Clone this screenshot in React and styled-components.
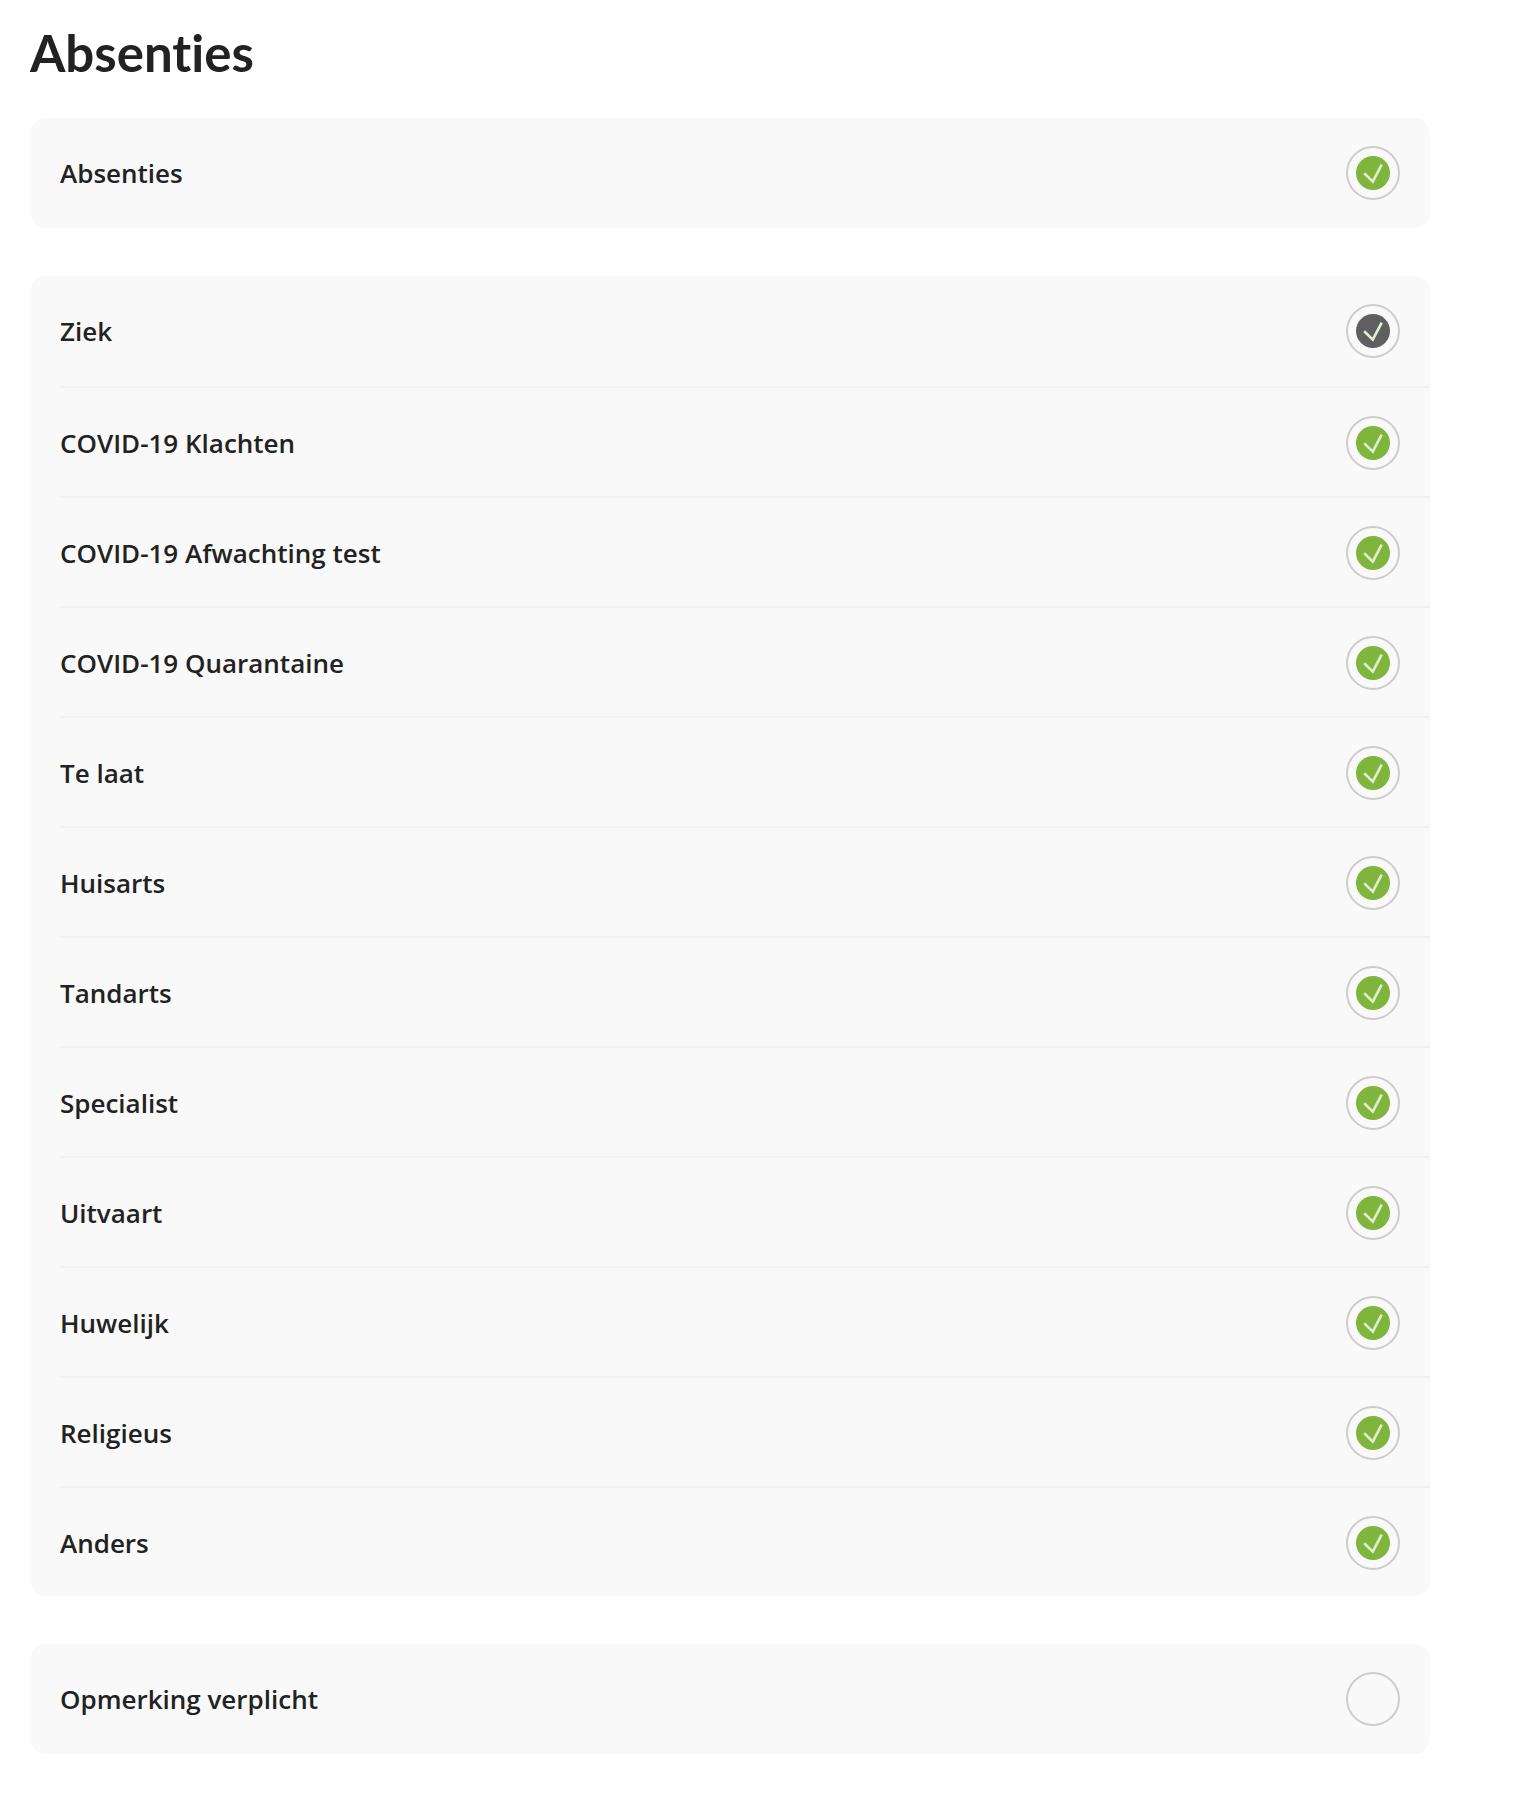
import React, { useState } from "react";
import styled, { createGlobalStyle } from "styled-components";

const GlobalStyle = createGlobalStyle`
    * {
        box-sizing: border-box;
    }

    body {
        margin: 0;
        background: #fff;
        color: #222;
        font-family: "Open Sans", "Noto Sans", sans-serif;
    }
`

const StyledPage = styled.main`
    display: flex;
    flex-direction: column;
    gap: 48px;
    padding: 24px 88px 46px 30px;
`

const StyledHeader = styled.header`
    display: flex;
    flex-direction: column;
    gap: 36px;
`

const StyledTitle = styled.h1`
    margin: 0;
    font-family: Lato, "Open Sans", sans-serif;
    font-size: 51px;
    line-height: 58px;
    font-weight: 700;
    font-variant-ligatures: none;
`

const StyledCard = styled.section`
    padding-left: 30px;
    border-radius: 16px;
    background: #f9f9f9;
`

const StyledRow = styled.label`
    display: flex;
    align-items: center;
    justify-content: space-between;
    padding: 28px 30px 28px 0;
    font-size: 26px;
    line-height: 36px;
    font-weight: 600;
    cursor: pointer;

    & + & {
        border-top: 2px solid #f1f1f1;
        padding-bottom: 26px;
    }
`

const StyledToggle = styled.span`
    display: grid;
    place-items: center;
    flex: none;
`

const StyledCheckbox = styled.input`
    appearance: none;
    grid-area: 1 / 1;
    width: 54px;
    height: 54px;
    margin: 0;
    border: 2px solid #ccc;
    border-radius: 50%;
    cursor: inherit;

    &:not(:checked) + svg {
        visibility: hidden;
    }
`

const StyledMark = styled.svg`
    grid-area: 1 / 1;
    width: 34px;
    height: 34px;
    border-radius: 50%;
    background: ${props => props.$locked ? '#5f5f5f' : '#7fb53c'};
    pointer-events: none;
`

const reasons = [
    { id: 'ziek', name: 'Ziek', locked: true },
    { id: 'klachten', name: 'COVID-19 Klachten' },
    { id: 'test', name: 'COVID-19 Afwachting test' },
    { id: 'quarantaine', name: 'COVID-19 Quarantaine' },
    { id: 'telaat', name: 'Te laat' },
    { id: 'huisarts', name: 'Huisarts' },
    { id: 'tandarts', name: 'Tandarts' },
    { id: 'specialist', name: 'Specialist' },
    { id: 'uitvaart', name: 'Uitvaart' },
    { id: 'huwelijk', name: 'Huwelijk' },
    { id: 'religieus', name: 'Religieus' },
    { id: 'anders', name: 'Anders' },
]

const Option = ({ id, name, locked, defaultOn = true }) => {
    const [on, setOn] = useState(defaultOn)

    return (
        <StyledRow htmlFor={id}>
            <span>{name}</span>
            <StyledToggle>
                <StyledCheckbox
                    type="checkbox"
                    id={id}
                    checked={on}
                    disabled={locked}
                    onChange={(e) => setOn(e.target.checked)}
                />
                <StyledMark $locked={locked} viewBox="0 0 34 34" fill="none" aria-hidden="true">
                    <path d="M8.2 17.2L16.8 25.6L25.7 8.6" stroke="#dfeecd" strokeWidth="2.7"/>
                </StyledMark>
            </StyledToggle>
        </StyledRow>
    )
}

const App = () => {
    return (
        <>
            <GlobalStyle/>
            <StyledPage>
                <StyledHeader>
                    <StyledTitle>Absenties</StyledTitle>
                    <StyledCard>
                        <Option id="absenties" name="Absenties"/>
                    </StyledCard>
                </StyledHeader>
                <StyledCard>
                    {reasons.map((el) => <Option key={el.id} {...el}/>)}
                </StyledCard>
                <StyledCard>
                    <Option id="opmerking" name="Opmerking verplicht" defaultOn={false}/>
                </StyledCard>
            </StyledPage>
        </>
    )
}

export default App;
